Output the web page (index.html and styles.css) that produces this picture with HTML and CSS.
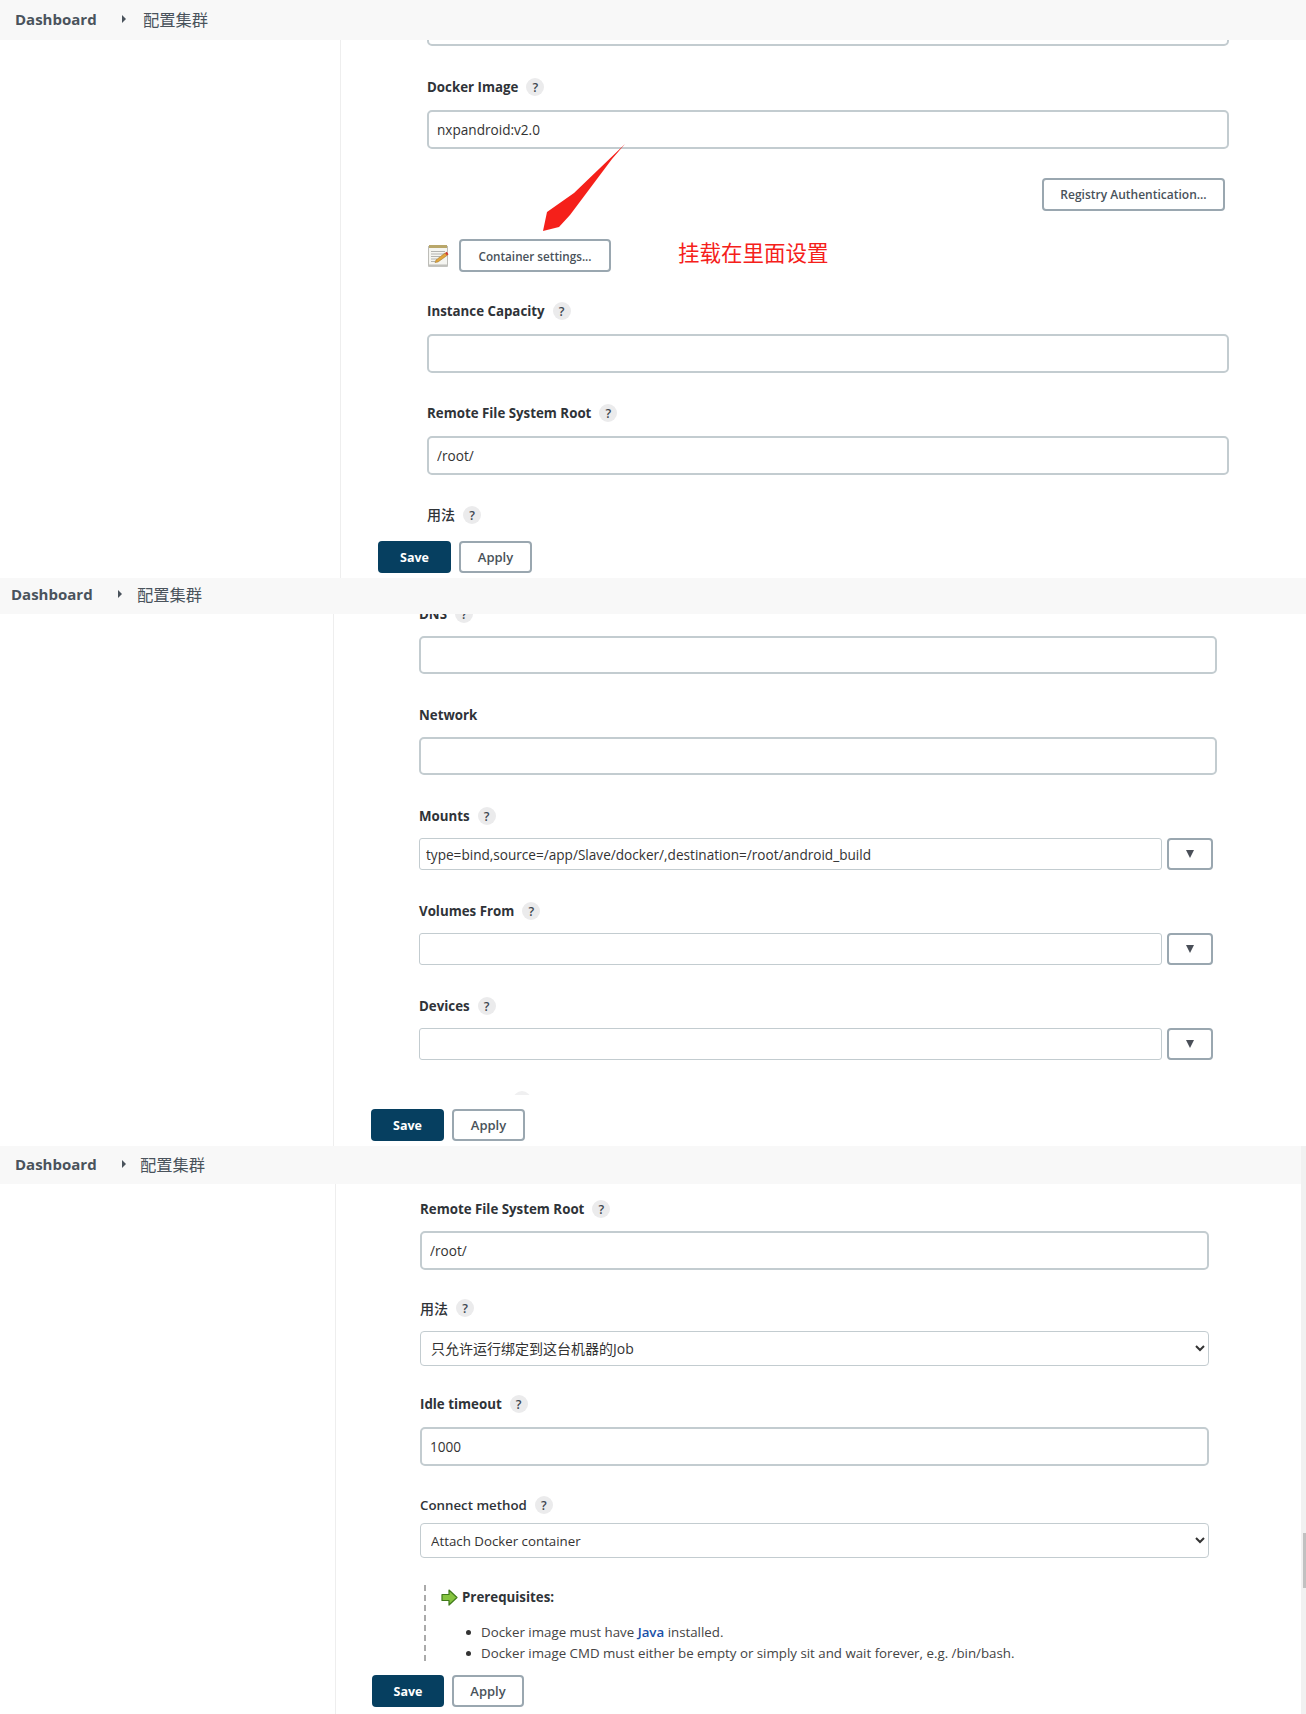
FILE: index.html
```html
<!DOCTYPE html>
<html lang="zh">
<head>
<meta charset="utf-8">
<title>配置集群</title>
<link rel="stylesheet" href="styles.css">
</head>
<body>

<section class="panel panel-a">
  <div class="panel-inner">
    <header class="crumbs">
      <span class="crumb-home">Dashboard</span>
      <span class="crumb-caret"></span>
      <span class="crumb-page">配置集群</span>
    </header>
    <div class="panel-body">
      <aside class="side"></aside>
      <main class="main">
        <div class="clipped-input"></div>
        <div class="field">
          <div class="label-row"><label class="label">Docker Image</label><span class="help">?</span></div>
          <input class="input" type="text" value="nxpandroid:v2.0">
        </div>
        <div class="btn-right"><button class="btn btn-registry">Registry Authentication...</button></div>
        <div class="container-row">
          <svg class="note-icon" viewBox="0 0 22 24" aria-hidden="true">
            <rect x="1" y="3" width="20" height="20" rx="1" fill="#c4c4c0"/>
            <rect x="1.500" y="2.500" width="19" height="18.500" fill="#f5f5f1" stroke="#bdbdb8"/>
            <rect x="2" y="1" width="18" height="3" fill="#b9a76a"/>
            <path d="M4 7.500h14M4 10h14M4 12.500h9M4 15h6M4 17.500h4" stroke="#b3b3b0" stroke-width="1"/>
            <path d="M8 18.500l1-2.500 9-7 2 2.500-9 6.500z" fill="#e3a63c" stroke="#8f6a24" stroke-width=".5"/>
            <path d="M18 9l2 2.500 1.500-1.300-1.800-2.400z" fill="#d23b2a"/>
          </svg>
          <button class="btn btn-container">Container settings...</button>
          <span class="note-red">挂载在里面设置</span>
        </div>
        <div class="field">
          <div class="label-row"><label class="label">Instance Capacity</label><span class="help">?</span></div>
          <input class="input" type="text">
        </div>
        <div class="field">
          <div class="label-row"><label class="label">Remote File System Root</label><span class="help">?</span></div>
          <input class="input" type="text" value="/root/">
        </div>
        <div class="label-row label-last"><label class="label label-cjk">用法</label><span class="help">?</span></div>
        <div class="actions">
          <button class="btn-save">Save</button>
          <button class="btn btn-apply">Apply</button>
        </div>
      </main>
    </div>
    <svg class="red-arrow" viewBox="0 0 90 95" aria-hidden="true">
      <polygon points="85,1 34,50 7,69 3,88 19,84 30,72 72,16" fill="#f5201a"/>
    </svg>
  </div>
</section>

<section class="panel panel-b">
  <div class="panel-inner">
    <header class="crumbs">
      <span class="crumb-home">Dashboard</span>
      <span class="crumb-caret"></span>
      <span class="crumb-page">配置集群</span>
    </header>
    <div class="panel-body">
      <aside class="side"></aside>
      <main class="main">
        <div class="field">
          <div class="label-row"><label class="label">DNS</label><span class="help">?</span></div>
          <input class="input" type="text">
        </div>
        <div class="field">
          <div class="label-row"><label class="label">Network</label></div>
          <input class="input" type="text">
        </div>
        <div class="field">
          <div class="label-row"><label class="label">Mounts</label><span class="help">?</span></div>
          <div class="combo">
            <input class="input input-thin" type="text" value="type=bind,source=/app/Slave/docker/,destination=/root/android_build">
            <button class="btn btn-drop"><span class="tri"></span></button>
          </div>
        </div>
        <div class="field">
          <div class="label-row"><label class="label">Volumes From</label><span class="help">?</span></div>
          <div class="combo">
            <input class="input input-thin" type="text">
            <button class="btn btn-drop"><span class="tri"></span></button>
          </div>
        </div>
        <div class="field field-last">
          <div class="label-row"><label class="label">Devices</label><span class="help">?</span></div>
          <div class="combo">
            <input class="input input-thin" type="text">
            <button class="btn btn-drop"><span class="tri"></span></button>
          </div>
        </div>
        <div class="clip-help"><span class="help"></span></div>
        <div class="actions">
          <button class="btn-save">Save</button>
          <button class="btn btn-apply">Apply</button>
        </div>
      </main>
    </div>
  </div>
</section>

<section class="panel panel-c">
  <div class="panel-inner">
    <header class="crumbs">
      <span class="crumb-home">Dashboard</span>
      <span class="crumb-caret"></span>
      <span class="crumb-page">配置集群</span>
    </header>
    <div class="panel-body">
      <aside class="side"></aside>
      <main class="main">
        <div class="field">
          <div class="label-row"><label class="label">Remote File System Root</label><span class="help">?</span></div>
          <input class="input" type="text" value="/root/">
        </div>
        <div class="field">
          <div class="label-row"><label class="label label-cjk">用法</label><span class="help">?</span></div>
          <select class="select select-usage"><option>只允许运行绑定到这台机器的Job</option></select>
        </div>
        <div class="field field-idle">
          <div class="label-row"><label class="label">Idle timeout</label><span class="help">?</span></div>
          <input class="input" type="text" value="1000">
        </div>
        <div class="field field-connect">
          <div class="label-row"><label class="label label-plain">Connect method</label><span class="help">?</span></div>
          <select class="select"><option>Attach Docker container</option></select>
        </div>
        <div class="prereq">
          <div class="prereq-title">
            <svg class="go-icon" viewBox="0 0 17 17" aria-hidden="true">
              <path d="M1 5.500h7V1l8 7.500-8 7.500v-4.500H1z" fill="#86c440" stroke="#3f7a1a" stroke-width="1.200" stroke-linejoin="round"/>
            </svg>
            <strong>Prerequisites:</strong>
          </div>
          <ul class="prereq-list">
            <li>Docker image must have <a class="link" href="#">Java</a> installed.</li>
            <li>Docker image CMD must either be empty or simply sit and wait forever, e.g. /bin/bash.</li>
          </ul>
        </div>
        <div class="actions">
          <button class="btn-save">Save</button>
          <button class="btn btn-apply">Apply</button>
        </div>
      </main>
    </div>
  </div>
  <div class="scrollbar"><div class="thumb"></div></div>
</section>

</body>
</html>
```

FILE: styles.css
```css
* { box-sizing: border-box; }
html, body { margin: 0; padding: 0; background: #fff; }
body {
  width: 1306px;
  height: 1714px;
  overflow: hidden;
  font-family: "Open Sans", "Noto Sans CJK SC", sans-serif;
  font-size: 13.300px;
  color: #333;
}

.panel { display: flex; overflow: hidden; }
.panel-inner { position: relative; flex: 1; min-width: 0; display: flex; flex-direction: column; }
.panel-a { height: 578px; --side: 341px; --save: 37px; --indent: 49px; --right: 77px; }
.panel-b { height: 568px; --side: 334px; --save: 37px; --indent: 48px; --right: 89px; }
.panel-c { height: 568px; --side: 336px; --save: 36px; --indent: 48px; --right: 92px; }

.crumbs {
  position: relative;
  z-index: 2;
  flex: none;
  display: flex;
  align-items: center;
  height: 40px;
  padding: 0 0 2px 15px;
  background: #f8f8f8;
}
.panel-b .crumbs { height: 36px; padding: 0 0 4px 11px; }
.panel-c .crumbs { height: 38px; }
.crumb-home { width: 82px; font-size: 15px; font-weight: 700; color: #4a535c; white-space: nowrap; }
.crumb-caret {
  margin-left: 25px;
  border-left: 4px solid #4a535c;
  border-top: 4px solid transparent;
  border-bottom: 4px solid transparent;
}
.crumb-page { margin-left: 17px; font-size: 16.300px; color: #4a535c; }
.panel-b .crumb-page { margin-left: 15px; }
.panel-c .crumb-page { margin-left: 14px; }

.panel-body { flex: 1; min-height: 0; display: flex; }
.side { flex: none; width: var(--side); border-right: 1px solid #eeeeee; }
.main { flex: 1; min-width: 0; padding: 0 var(--right) 0 0; }
.main > *:not(.actions) { margin-left: calc(var(--save) + var(--indent)); }

.clipped-input {
  height: 39px;
  margin-top: -33px;
  margin-bottom: 31px;
  border: 2px solid #c3ccd0;
  border-radius: 5px;
}
.panel-c .main { padding-top: 15px; }
.panel-b .main { margin-top: -10px; }

.field { margin-bottom: 30px; }
.label-row { display: flex; align-items: center; gap: 8px; height: 20px; margin-bottom: 13px; }
.panel-b .label-row { margin-bottom: 12px; }
.panel-b .field { margin-bottom: 31px; }
.panel-b .field-last { margin-bottom: 0; }
.label { font-size: 13.300px; font-weight: 700; color: #2f3338; white-space: nowrap; }
.label-cjk { font-size: 14px; font-weight: 500; }
.label-plain { font-weight: 600; }
.label-last { margin-bottom: 16px; }
.label-last .label-cjk { margin-bottom: 2px; }
.help {
  flex: none;
  display: flex;
  align-items: center;
  justify-content: center;
  width: 18px;
  height: 18px;
  border-radius: 50%;
  background: #ebebec;
  font-size: 12.500px;
  font-weight: 600;
  color: #3f4750;
}

.input {
  display: block;
  width: 100%;
  height: 39px;
  padding: 0 8px;
  border: 2px solid #c3ccd0;
  border-radius: 5px;
  background: #fff;
  font: inherit;
  font-size: 13.600px;
  color: #333;
  outline: none;
}
.panel-b .input { height: 38px; }
.panel-b .input-thin { flex: 1; min-width: 0; height: 32px; padding: 0 6px; border-width: 1px; border-radius: 3px; }
.combo { display: flex; gap: 5px; align-items: center; }

.btn {
  display: inline-flex;
  align-items: center;
  justify-content: center;
  height: 33px;
  padding: 0;
  border: 2px solid #9aa7b0;
  border-radius: 4px;
  background: #fff;
  font: inherit;
  font-size: 12px;
  font-weight: 600;
  color: #49525a;
  white-space: nowrap;
}
.btn-right { display: flex; justify-content: flex-end; margin: -1px 4px 28px 0; }
.btn-registry { width: 183px; }
.container-row { display: flex; align-items: center; margin-bottom: 29px; }
.note-icon { flex: none; width: 22px; height: 24px; margin-right: 10px; }
.btn-container { width: 152px; font-size: 11.700px; }
.note-red { margin: 0 0 6px 67px; font-size: 21.500px; line-height: 24px; color: #f5201a; white-space: nowrap; }
.red-arrow { position: absolute; left: 540px; top: 143px; width: 90px; height: 95px; }

.actions {
  display: flex;
  gap: 8px;
  padding-left: var(--save);
  background: #fff;
}
.btn-save {
  width: 73px;
  height: 32px;
  border: 0;
  border-radius: 4px;
  background: #063f60;
  color: #fff;
  font: inherit;
  font-size: 12.500px;
  font-weight: 700;
}
.btn-apply { width: 73px; height: 32px; font-size: 13px; }
.panel-c .btn-save, .panel-c .btn-apply { width: 72px; }

.btn-drop { flex: none; width: 46px; height: 32px; margin-right: 4px; }
.tri {
  border-top: 8px solid #4a4f58;
  border-left: 4.500px solid transparent;
  border-right: 4.500px solid transparent;
}
.clip-help { height: 4px; margin-top: 31px; margin-bottom: 14px; padding-left: 94px; overflow: hidden; }
.clip-help .help { background: #f0f0f1; }

.select {
  display: block;
  width: 100%;
  height: 35px;
  padding: 0 6px;
  border: 1px solid #c3ccd0;
  border-radius: 4px;
  background-color: #fff;
  font: inherit;
  color: #333;
}
.select-usage { font-size: 14px; }
.panel-c .field { margin-bottom: 28px; }
.panel-c .field:first-child .label-row { margin-bottom: 12px; }
.panel-c .field-idle { margin-bottom: 29px; }
.panel-c .field-connect { margin-bottom: 27px; }
.field-connect .label-row { margin-bottom: 8px; }

.main > .prereq {
  height: 76px;
  margin-bottom: 14px;
  margin-left: calc(var(--save) + var(--indent) + 4px);
  padding-left: 15px;
  border-left: 2px dashed #aaaaaa;
  overflow: hidden;
}
.prereq-title { display: flex; align-items: center; gap: 4px; margin-top: 3px; height: 18px; }
.prereq-title strong { font-weight: 700; color: #2f3338; }
.go-icon { flex: none; width: 17px; height: 17px; }
.prereq-list { margin: 16px 0 0; padding: 0 0 0 40px; list-style: none; }
.prereq-list li { position: relative; height: 21px; line-height: 21px; color: #444; white-space: nowrap; }
.prereq-list li::before {
  content: "";
  position: absolute;
  left: -15px;
  top: 8px;
  width: 5px;
  height: 5px;
  border-radius: 50%;
  background: #333;
}
.link { color: #1a4fa8; font-weight: 600; text-decoration: none; }

.scrollbar { flex: none; width: 5px; padding-top: 387px; padding-left: 2px; background: #f1f1f1; }
.thumb { height: 55px; background: #c1c1c1; }
```
